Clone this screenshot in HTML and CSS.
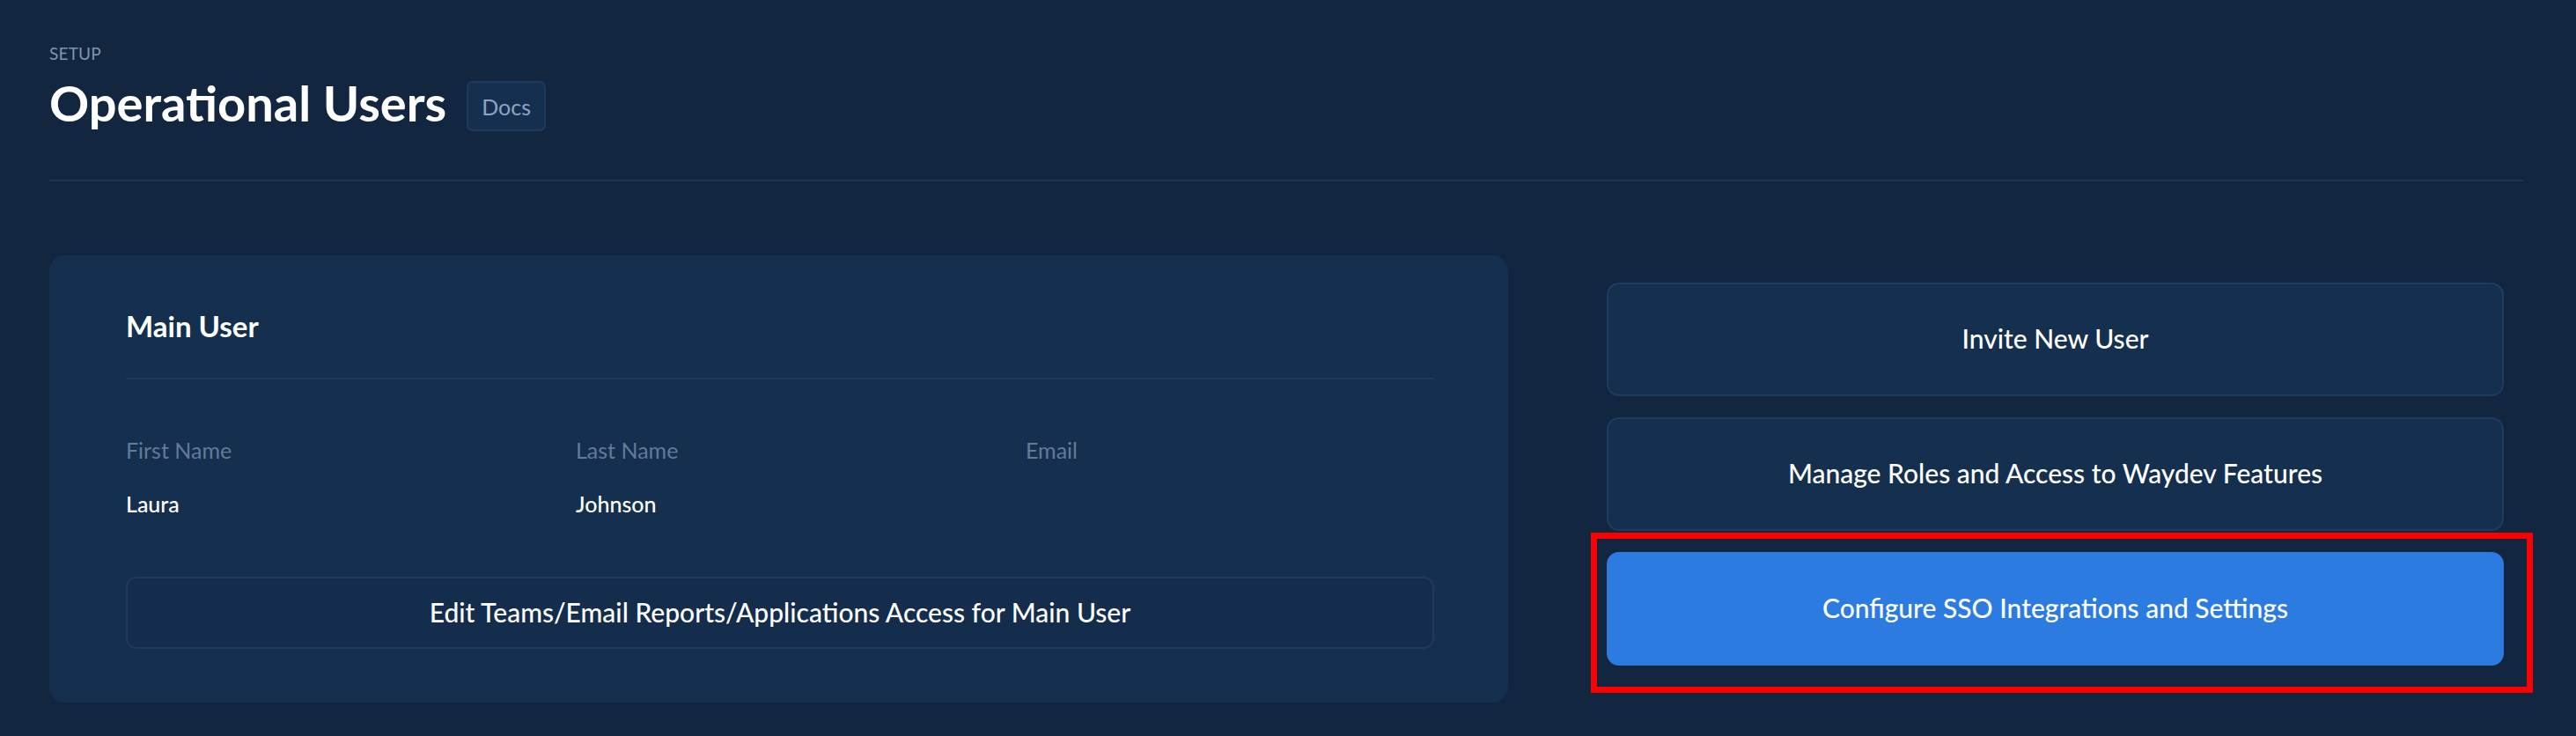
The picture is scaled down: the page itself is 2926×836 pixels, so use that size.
FILE: index.html
```html
<!DOCTYPE html>
<html lang="en">
<head>
<meta charset="utf-8">
<title>Operational Users</title>
<link rel="stylesheet" href="styles.css">
</head>
<body>
<div class="page">
  <header class="header">
    <div class="eyebrow">SETUP</div>
    <div class="title-row">
      <h1 class="title">Operational Users</h1>
      <a class="docs" href="#">Docs</a>
    </div>
  </header>
  <div class="divider"></div>
  <main class="content">
    <section class="card">
      <h2 class="card-title">Main User</h2>
      <div class="card-divider"></div>
      <div class="fields">
        <div class="field">
          <div class="field-label">First Name</div>
          <div class="field-value">Laura</div>
        </div>
        <div class="field">
          <div class="field-label">Last Name</div>
          <div class="field-value">Johnson</div>
        </div>
        <div class="field">
          <div class="field-label">Email</div>
          <div class="field-value"></div>
        </div>
      </div>
      <button class="btn btn-outline">Edit Teams/Email Reports/Applications Access for Main User</button>
    </section>
    <aside class="actions">
      <button class="btn action">Invite New User</button>
      <button class="btn action">Manage Roles and Access to Waydev Features</button>
      <button class="btn action action-primary">Configure SSO Integrations and Settings</button>
      <div class="highlight"></div>
    </aside>
  </main>
</div>
</body>
</html>
```
FILE: styles.css
```css
* { box-sizing: border-box; }

html, body {
  margin: 0;
  padding: 0;
  background: #12263f;
}

body {
  font-family: "Lato", "Liberation Sans", sans-serif;
  color: #ffffff;
}

.page {
  min-height: 836px;
  padding: 51px 60px 0 56px;
}

.eyebrow {
  font-size: 19px;
  line-height: 1;
  color: #8194b2;
  letter-spacing: 0.2px;
}

.title-row {
  display: flex;
  align-items: flex-start;
  margin-top: 19px;
}

.title {
  margin: 0;
  font-size: 56px;
  line-height: 1;
  font-weight: 700;
  color: #ffffff;
}

.docs {
  margin-left: 23px;
  margin-top: 3px;
  height: 57px;
  width: 90px;
  display: inline-flex;
  align-items: center;
  justify-content: center;
  border: 2px solid #1d3a5e;
  border-radius: 7px;
  background: #15304f;
  color: #8ea3c2;
  font-size: 25px;
  text-decoration: none;
}

.divider {
  margin-top: 55px;
  height: 2px;
  background: #1b3556;
}

.content {
  display: flex;
  align-items: flex-start;
  margin-top: 84px;
}

.card {
  width: 1657px;
  flex: none;
  padding: 64px 84px 61px 87px;
  background: #152f4f;
  border-radius: 18px;
}

.card-title {
  margin: 0;
  font-size: 33px;
  line-height: 1;
  font-weight: 700;
}

.card-divider {
  margin-top: 42px;
  height: 2px;
  background: #1d3a5c;
}

.fields {
  display: grid;
  grid-template-columns: repeat(3, 1fr);
  column-gap: 47px;
  margin-top: 68px;
}

.field-label {
  font-size: 25px;
  line-height: 1;
  color: #627a9b;
}

.field-value {
  margin-top: 36px;
  font-size: 25px;
  line-height: 1;
  min-height: 25px;
  font-weight: 500;
  color: #ffffff;
}

.btn {
  display: flex;
  align-items: center;
  justify-content: center;
  width: 100%;
  padding: 0 0 3px;
  font-family: "Lato", "Liberation Sans", sans-serif;
  font-size: 30px;
  font-weight: 500;
  color: #ffffff;
  cursor: pointer;
}

.btn-outline {
  margin-top: 70px;
  height: 82px;
  background: #142d4c;
  border: 2px solid #1e3a5e;
  border-radius: 12px;
}

.actions {
  position: relative;
  flex: none;
  width: 1019px;
  margin-left: 112px;
  margin-top: 31px;
  display: flex;
  flex-direction: column;
  gap: 24px;
}

.action {
  height: 129px;
  background: #15304f;
  border: 2px solid #1e3b60;
  border-radius: 14px;
}

.action-primary {
  background: #2b7be0;
  border-color: #2b7be0;
}

.highlight {
  position: absolute;
  left: -18px;
  top: 284px;
  width: 1070px;
  height: 182px;
  border: 7px solid #ff0000;
  pointer-events: none;
}
```
